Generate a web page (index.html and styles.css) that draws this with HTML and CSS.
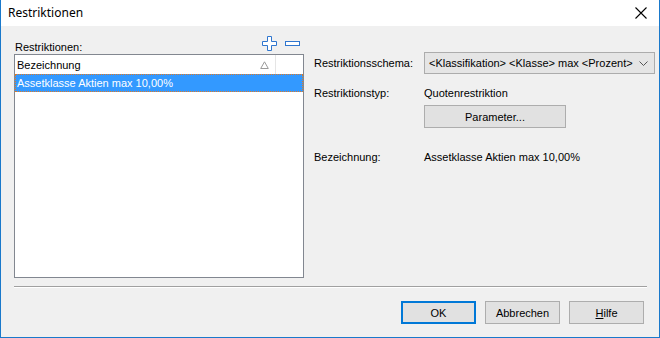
FILE: index.html
```html
<!DOCTYPE html>
<html lang="de">
<head>
    <meta charset="UTF-8">
    <title>Restriktionen</title>
    <link rel="stylesheet" href="styles.css">
</head>
<body>
<div class="window">
    <div class="titlebar">
        <span class="title">Restriktionen</span>
        <svg class="close" width="12" height="12" viewBox="0 0 12 12">
            <path d="M0.5 0.5 L11.5 11.5 M11.5 0.5 L0.5 11.5" stroke="#000" stroke-width="1.1" fill="none"/>
        </svg>
    </div>
    <div class="body">
        <div class="main">
            <div class="left">
                <div class="list-head">
                    <span>Restriktionen:</span>
                    <div class="tools">
                        <svg width="15" height="15" viewBox="0 0 15 15">
                            <path d="M5.5 0.5 H9.5 V5.5 H14.5 V9.5 H9.5 V14.5 H5.5 V9.5 H0.5 V5.5 H5.5 Z" stroke="#2f76cf" stroke-width="1" fill="#fff"/>
                        </svg>
                        <svg width="15" height="5" viewBox="0 0 15 5">
                            <rect x="0.5" y="0.5" width="14" height="4" stroke="#2f76cf" stroke-width="1" fill="#fff"/>
                        </svg>
                    </div>
                </div>
                <div class="listbox">
                    <div class="col-header">
                        <div class="col-name">
                            <span>Bezeichnung</span>
                            <svg width="9" height="8" viewBox="0 0 9 8">
                                <path d="M4.5 0.8 L8.3 7.5 H0.7 Z" stroke="#9a9a9a" stroke-width="1" fill="none"/>
                            </svg>
                        </div>
                        <div class="col-rest"></div>
                    </div>
                    <div class="row selected">Assetklasse Aktien max 10,00%</div>
                </div>
            </div>
            <div class="right">
                <div class="field schema">
                    <label>Restriktionsschema:</label>
                    <div class="combo">
                        <span>&lt;Klassifikation&gt; &lt;Klasse&gt; max &lt;Prozent&gt;</span>
                        <svg width="9" height="5" viewBox="0 0 9 5">
                            <path d="M0.5 0.5 L4.5 4.5 L8.5 0.5" stroke="#555" stroke-width="1" fill="none"/>
                        </svg>
                    </div>
                </div>
                <div class="field type">
                    <label>Restriktionstyp:</label>
                    <span>Quotenrestriktion</span>
                </div>
                <div class="field param-row">
                    <label></label>
                    <button class="btn param">Parameter...</button>
                </div>
                <div class="field desc">
                    <label>Bezeichnung:</label>
                    <span>Assetklasse Aktien max 10,00%</span>
                </div>
            </div>
        </div>
        <div class="separator"></div>
        <div class="buttons">
            <button class="btn default">OK</button>
            <button class="btn">Abbrechen</button>
            <button class="btn"><u>H</u>ilfe</button>
        </div>
    </div>
</div>
</body>
</html>
```
FILE: styles.css
```css
body {
    margin: 0;
    font-family: "Liberation Sans", Arial, sans-serif;
    font-size: 11px;
    color: #000;
    background: #fff;
}
.window {
    width: 660px;
    height: 338px;
    box-sizing: border-box;
    border: 1px solid #1a79cb;
    border-top: none;
    background: #f0f0f0;
    display: flex;
    flex-direction: column;
}
.titlebar {
    height: 26px;
    background: #fff;
    display: flex;
    align-items: center;
    justify-content: space-between;
    padding: 0 12px 0 7px;
}
.title {
    font-size: 12px;
    font-family: "Noto Sans", sans-serif;
    margin-top: -1px;
}
.body {
    flex: 1;
    padding: 9px 12px 0 13px;
    display: flex;
    flex-direction: column;
}
.main {
    display: flex;
    gap: 10px;
}
.left {
    width: 290px;
    flex: none;
    display: flex;
    flex-direction: column;
}
.list-head {
    display: flex;
    justify-content: space-between;
    align-items: flex-end;
    height: 19px;
}
.list-head span {
    margin-left: 1px;
    margin-bottom: 1px;
}
.tools {
    display: flex;
    align-items: center;
    gap: 8px;
    margin-right: 4px;
    margin-bottom: 3px;
}
.listbox {
    height: 224px;
    box-sizing: border-box;
    border: 1px solid #828790;
    background: #fff;
}
.col-header {
    display: flex;
    height: 19px;
}
.col-name {
    width: 261px;
    display: flex;
    align-items: center;
    justify-content: space-between;
    padding: 0 6px 0 2px;
    box-sizing: border-box;
    border-right: 1px solid #e5e5e5;
}
.col-rest {
    flex: 1;
}
.row {
    height: 18px;
    line-height: 16px;
    padding-left: 2px;
    box-sizing: border-box;
}
.selected {
    background: #3399ff;
    color: #fff;
    border: 1px dotted #e27a23;
    padding-left: 1px;
}
.right {
    flex: 1;
    display: flex;
    flex-direction: column;
    padding-top: 17px;
}
.field {
    display: flex;
    align-items: center;
}
.field label {
    width: 110px;
    flex: none;
}
.field.type {
    margin-top: 13px;
}
.field.param-row {
    margin-top: 6px;
}
.field.desc {
    margin-top: 23px;
}
.combo {
    width: 231px;
    height: 22px;
    box-sizing: border-box;
    border: 1px solid #acacac;
    background: #e5e5e5;
    display: flex;
    align-items: center;
    justify-content: space-between;
    padding: 0 6px 0 4px;
}
.btn {
    font-family: "Liberation Sans", Arial, sans-serif;
    font-size: 11px;
    color: #000;
    background: #e1e1e1;
    border: 1px solid #adadad;
    height: 23px;
    width: 75px;
    padding: 0;
}
.param {
    width: 142px;
}
.separator {
    margin-top: 8px;
    border-top: 1px solid #a0a0a0;
    border-bottom: 1px solid #fff;
}
.buttons {
    display: flex;
    justify-content: flex-end;
    gap: 9px;
    margin-top: 13px;
    padding-right: 3px;
}
.btn.default {
    border: 2px solid #0078d7;
}
```
